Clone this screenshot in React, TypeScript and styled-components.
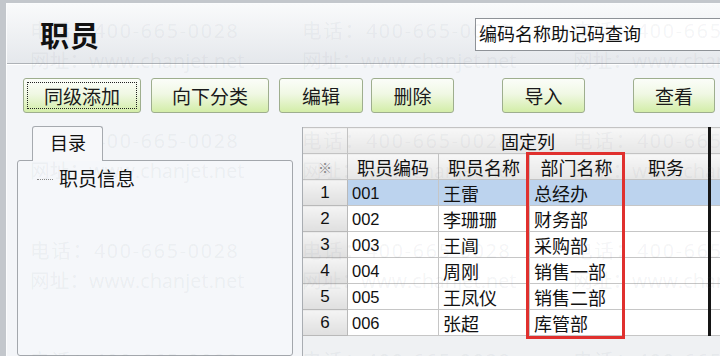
import React from "react";
import styled, { createGlobalStyle } from "styled-components";

const CJK = `"Noto Sans CJK SC", "Noto Sans", sans-serif`;

const Global = createGlobalStyle`
  html, body { margin: 0; padding: 0; background: #c5c9ce; }
  * { box-sizing: border-box; }
  body { font-family: ${CJK}; }
`;

const Frame = styled.div`
  position: relative;
  width: 720px;
  height: 356px;
  overflow: hidden;
  background: #c3c7cc;
  padding: 3px 0 0 6px;
`;

const Window = styled.div`
  height: 100%;
  display: flex;
  flex-direction: column;
  background: #f3f5f8;
  border-left: 1px solid #fbfcfd;
  border-top: 1px solid #fbfcfd;
`;

const Header = styled.div`
  height: 60px;
  flex: none;
  display: flex;
  align-items: center;
  justify-content: space-between;
  padding-left: 33px;
  background: linear-gradient(#f9fafb, #e5e8ec);
  border-bottom: 1px solid #aeb2b7;
  box-shadow: 0 1px 0 #ffffff;
`;

const Title = styled.div`
  font-size: 29px;
  font-weight: 700;
  color: #111;
  letter-spacing: 1px;
  line-height: 1;
  margin-top: 2px;
`;

const Search = styled.div`
  width: 250px;
  height: 33px;
  margin-right: -5px;
  margin-top: 1px;
  background: #fff;
  border: 1px solid #8e9297;
  font-size: 18px;
  line-height: 29px;
  padding-left: 3px;
  color: #111;
`;

const Toolbar = styled.div`
  height: 54px;
  flex: none;
  display: flex;
  align-items: flex-start;
  padding: 14px 0 0 16px;
`;

const Button = styled.div<{ $w: number; $ml: number; $focus?: boolean }>`
  position: relative;
  width: ${(p) => p.$w}px;
  height: 35px;
  margin-left: ${(p) => p.$ml}px;
  border: 1px solid #9eae8e;
  border-radius: 3px;
  background: linear-gradient(#fbfdf9 0%, #f0f8e4 45%, #d3eda8 100%);
  display: flex;
  align-items: center;
  justify-content: center;
  font-size: 19px;
  color: #1a1a1a;
  &::after {
    content: "";
    display: ${(p) => (p.$focus ? "block" : "none")};
    position: absolute;
    inset: 3px;
    border: 1px dotted #222;
  }
`;

const Content = styled.div`
  flex: 1;
  min-height: 0;
  display: flex;
`;

const LeftCol = styled.div`
  width: 295px;
  flex: none;
  padding: 8px 9px 0 10px;
  display: flex;
  flex-direction: column;
`;

const Tab = styled.div`
  width: 71px;
  height: 35px;
  margin-left: 15px;
  margin-bottom: -1px;
  position: relative;
  z-index: 1;
  border: 1px solid #a6aaaf;
  border-bottom: none;
  border-radius: 3px 3px 0 0;
  background: #f7f8fa;
  font-size: 18px;
  line-height: 30px;
  padding-left: 17px;
  color: #111;
`;

const TreeBox = styled.div`
  flex: 1;
  border: 1px solid #a3a7ac;
  border-radius: 3px;
  background: #f5f7fa;
  padding: 6px 0 0 19px;
`;

const TreeItem = styled.div`
  display: flex;
  align-items: center;
  font-size: 19px;
  color: #111;
  line-height: 22px;
  &::before {
    content: "";
    width: 16px;
    border-top: 1px dotted #888;
    margin-right: 6px;
    margin-top: 2px;
  }
`;

const RightCol = styled.div`
  flex: 1;
  margin-top: 9px;
  position: relative;
  background: #eff1f3;
  border-left: 1px solid #a9adb2;
  overflow: hidden;
`;

const Table = styled.table`
  border-collapse: collapse;
  table-layout: fixed;
  width: 460px;
  margin-left: -1px;
  background: #fff;
`;

const Th = styled.th<{ $bar?: boolean }>`
  height: 26px;
  padding: 0;
  font-weight: 400;
  font-size: 18px;
  color: #111;
  text-align: center;
  border: 1px solid #c3c3c3;
  ${(p) => (p.$bar ? "border-right: 3px solid #151515;" : "")}
  background: linear-gradient(#f7f7f7, #e6e6e6);
  line-height: 24px;
`;

const Corner = styled(Th)`
  font-size: 14px;
  color: #8a8a8a;
`;

const RowHead = styled.td`
  height: 26px;
  padding: 0;
  text-align: center;
  font-family: "Liberation Sans", Arial, sans-serif;
  font-size: 17px;
  color: #111;
  border: 1px solid #b9b9b9;
  background: linear-gradient(#f4f4f4, #dfdfdf);
`;

const Td = styled.td<{ $sel?: boolean; $bar?: boolean; $code?: boolean }>`
  height: 26px;
  padding: 0 0 0 4px;
  white-space: nowrap;
  overflow: hidden;
  font-family: ${(p) => (p.$code ? `"Liberation Sans", Arial, sans-serif` : CJK)};
  font-size: ${(p) => (p.$code ? "16.5px" : "18px")};
  color: #111;
  border: 1px solid #c6c6c6;
  ${(p) => (p.$bar ? "border-right: 3px solid #151515;" : "")}
  background: ${(p) => (p.$sel ? "#bcd3ee" : "#ffffff")};
  line-height: 24px;
`;

const RedBox = styled.div`
  position: absolute;
  left: 223px;
  top: 25px;
  width: 99px;
  height: 187px;
  border: 3px solid #e0302e;
  pointer-events: none;
`;

const Watermarks = styled.div`
  position: absolute;
  inset: 0;
  pointer-events: none;
`;

const Mark = styled.div`
  position: absolute;
  font-family: "Open Sans", "Noto Sans CJK SC", sans-serif;
  font-size: 19.5px;
  line-height: 30px;
  color: rgba(110, 120, 135, 0.085);
  white-space: nowrap;
`;

const MarkLine = styled.div<{ $sp: number }>`
  letter-spacing: ${(p) => p.$sp}px;
`;

const rows = [
  { n: "1", code: "001", name: "王雷", dept: "总经办" },
  { n: "2", code: "002", name: "李珊珊", dept: "财务部" },
  { n: "3", code: "003", name: "王阊", dept: "采购部" },
  { n: "4", code: "004", name: "周刚", dept: "销售一部" },
  { n: "5", code: "005", name: "王凤仪", dept: "销售二部" },
  { n: "6", code: "006", name: "张超", dept: "库管部" },
];

const buttons = [
  { t: "同级添加", w: 118, ml: 0, f: true },
  { t: "向下分类", w: 118, ml: 10 },
  { t: "编辑", w: 84, ml: 10 },
  { t: "删除", w: 83, ml: 8 },
  { t: "导入", w: 83, ml: 48 },
  { t: "查看", w: 82, ml: 48 },
];

const markX = [30, 302, 573];
const markY = [16, 126, 236, 346];

export default function App() {
  return (
    <>
      <Global />
      <Frame>
        <Window>
          <Header>
            <Title>职员</Title>
            <Search>编码名称助记码查询</Search>
          </Header>
          <Toolbar>
            {buttons.map((b) => (
              <Button key={b.t} $w={b.w} $ml={b.ml} $focus={b.f}>
                {b.t}
              </Button>
            ))}
          </Toolbar>
          <Content>
            <LeftCol>
              <Tab>目录</Tab>
              <TreeBox>
                <TreeItem>职员信息</TreeItem>
              </TreeBox>
            </LeftCol>
            <RightCol>
              <Table>
                <colgroup>
                  <col style={{ width: 45 }} />
                  <col style={{ width: 91 }} />
                  <col style={{ width: 91 }} />
                  <col style={{ width: 94 }} />
                  <col style={{ width: 86 }} />
                  <col style={{ width: 53 }} />
                </colgroup>
                <thead>
                  <tr>
                    <Th />
                    <Th colSpan={4} $bar>
                      固定列
                    </Th>
                    <Th />
                  </tr>
                  <tr>
                    <Corner>※</Corner>
                    <Th>职员编码</Th>
                    <Th>职员名称</Th>
                    <Th>部门名称</Th>
                    <Th $bar>职务</Th>
                    <Th />
                  </tr>
                </thead>
                <tbody>
                  {rows.map((r, i) => (
                    <tr key={r.n}>
                      <RowHead>{r.n}</RowHead>
                      <Td $code $sel={i === 0}>
                        {r.code}
                      </Td>
                      <Td $sel={i === 0}>{r.name}</Td>
                      <Td $sel={i === 0}>{r.dept}</Td>
                      <Td $sel={i === 0} $bar />
                      <Td $sel={i === 0} />
                    </tr>
                  ))}
                </tbody>
              </Table>
              <RedBox />
            </RightCol>
          </Content>
        </Window>
        <Watermarks>
          {markY.flatMap((y) =>
            markX.map((x) => (
              <Mark key={`${x}-${y}`} style={{ left: x, top: y }}>
                <MarkLine $sp={1.8}>电话：400-665-0028</MarkLine>
                <MarkLine $sp={0.2}>网址：www.chanjet.net</MarkLine>
              </Mark>
            ))
          )}
        </Watermarks>
      </Frame>
    </>
  );
}
